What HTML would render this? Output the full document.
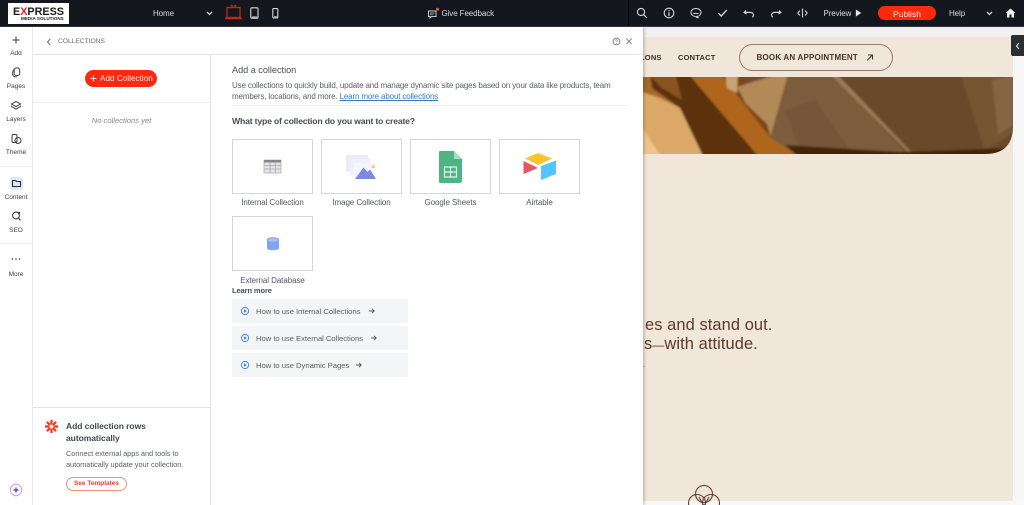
<!DOCTYPE html>
<html><head><meta charset="utf-8">
<style>
html,body{margin:0;padding:0;background:#f1f1f1}
#r{position:relative;width:1024px;height:505px;overflow:hidden;background:#f1f1f1;font-family:"Liberation Sans",sans-serif;color:#4a4c55}
#r div,#r span.t{position:absolute}
.t{white-space:nowrap;line-height:1}
.rl{left:0;width:32px;text-align:center;font-size:6.5px;color:#3c3e46}
.w{color:#d8d9dc;font-size:8px;letter-spacing:-.1px}
.card{width:79px;height:53px;border:1px solid #d4d5d8;background:#fff;box-sizing:content-box}
.cl{font-size:8px;letter-spacing:-.08px;color:#55575f;text-align:center;width:81px}
.lm{left:232px;width:176px;height:24px;background:#f4f5f6;border-radius:2px}
.desc{font-size:8px;letter-spacing:-.15px;color:#5d5f67}
.how{font-size:7.7px;letter-spacing:-.05px;color:#5d5f67}
svg{position:absolute;overflow:visible}
</style></head><body>
<div id="r">
<!-- right strip + page -->
<div style="left:1013px;top:37px;width:11px;height:468px;background:#f7f7f7"></div>
<div style="left:640px;top:37px;width:373px;height:464px;background:#f0e6da"></div>
<div style="left:640px;top:501px;width:384px;height:4px;background:#f8f8f8"></div>
<!-- hero image -->
<svg style="left:0;top:0" width="1024" height="505" viewBox="0 0 1024 505">
<defs><filter id="b" x="-5%" y="-5%" width="110%" height="110%"><feGaussianBlur stdDeviation="1.1"/></filter>
<clipPath id="c"><path d="M640 77H1013V126Q1013 154 985 154H640Z"/></clipPath></defs>
<g clip-path="url(#c)"><g filter="url(#b)">
<rect x="636" y="72" width="382" height="86" fill="#704e2e"/>
<polygon points="636,72 700,72 760,158 636,158" fill="#dca868"/>
<polygon points="636,72 690,72 680,108 660,98 636,90" fill="#a7682c"/>
<polygon points="636,118 662,158 636,158" fill="#eec48d"/>
<polygon points="650,72 687,72 760,158 704,158 680,108 652,88" fill="#5c300f"/>
<polygon points="650,76 675,72 682,100 662,88" fill="#8a5320"/>
<polygon points="687,72 719,72 770,137 796,154 760,158" fill="#b0651d"/>
<polygon points="719,72 738,72 778,132 770,137" fill="#7c4516"/>
<polygon points="725,72 738,72 737,93 727,88" fill="#c8a473"/>
<polygon points="737,87 785,72 790,80 771,138 767,124 746,104" fill="#b28a58"/>
<polygon points="770,138 788,74 832,72 908,156 795,153" fill="#7d5c3c"/>
<polygon points="785,110 815,100 850,150 800,150" fill="#775537"/>
<polygon points="828,72 835,72 915,154 910,154" fill="#9b7a55"/>
<polygon points="835,72 1018,72 1018,158 915,156" fill="#6b4a2b"/>
<polygon points="960,72 1018,72 1018,130 985,150 975,120" fill="#755433"/>
<polygon points="992,80 1013,76 1013,125 998,135" fill="#866545"/>
<polygon points="785,145 900,152 1010,148 1000,158 800,158" fill="#3f250f"/>
</g></g>
<!-- flower logo -->
<g fill="none" stroke="#5d3c2c" stroke-width="1.100">
<circle cx="704" cy="494" r="8.500"/><circle cx="697" cy="503" r="8.500"/><circle cx="711" cy="503" r="8.500"/>
<path d="M699 497L704 506L709 497"/>
</g>
<circle cx="644" cy="366.500" r=".6" fill="#9a8272"/>
</svg>
<!-- nav text -->
<span class="t" style="left:640px;top:53.500px;font-size:7.500px;font-weight:bold;color:#402c25;letter-spacing:.2px">LONS</span>
<span class="t" style="left:678px;top:53.500px;font-size:7.500px;font-weight:bold;color:#402c25;letter-spacing:.2px">CONTACT</span>
<div style="left:738.500px;top:43.500px;width:152px;height:25px;border:1px solid #947a6c;border-radius:14px;box-sizing:content-box"></div>
<span class="t" style="left:756.500px;top:53.500px;font-size:8px;font-weight:bold;color:#4a342b;letter-spacing:.2px">BOOK AN APPOINTMENT</span>
<svg style="left:865px;top:53px" width="9" height="9"><path d="M2 7.500L7.500 2M3 2H7.500V6.500" fill="none" stroke="#4a342b" stroke-width="1"/></svg>
<!-- hero text -->
<span class="t" style="left:645px;top:317px;font-size:16.400px;color:#5a3a2b;letter-spacing:.1px">es and stand out.</span>
<span class="t" style="left:644px;top:336px;font-size:16.400px;color:#5a3a2b;letter-spacing:.1px">s<span style="font-size:12px">—</span>with attitude.</span>
<!-- side tab -->
<div style="left:1011px;top:35px;width:13px;height:21px;background:#2a2d34;border-radius:2px 0 0 2px"></div>
<svg style="left:1015px;top:42px" width="6" height="8"><path d="M4 1L1.500 4L4 7" fill="none" stroke="#e5e5e5" stroke-width="1.100"/></svg>

<!-- top bar -->
<div style="left:0;top:0;width:1024px;height:26px;background:#15171f;border-bottom:1px solid #33353c"></div>
<div style="left:8px;top:3px;width:61px;height:21px;background:#fff"></div>
<span class="t" style="left:13px;top:7px;font-size:10.800px;font-weight:bold;color:#1a1a1a;letter-spacing:0">E<span style="color:#d3232a">X</span>PRESS</span>
<span class="t" style="left:21px;top:16.500px;font-size:4.600px;font-weight:bold;color:#222">MEDIA SOLUTIONS</span>
<span class="t w" style="left:153px;top:9.500px">Home</span>
<svg style="left:206px;top:11px" width="7" height="5"><path d="M1 1L3.500 3.500L6 1" fill="none" stroke="#ddd" stroke-width="1.300"/></svg>
<!-- desktop -->
<svg style="left:225px;top:4px" width="17" height="16" viewBox="0 0 17 16"><path d="M5.500 2.500L6 0.500L8.500 2L11 .5L11.500 2.500Z" fill="#c9260f"/><rect x="2" y="3.500" width="13" height="10" fill="none" stroke="#c9260f" stroke-width="1.300"/><rect x="0" y="13.500" width="17" height="1.700" fill="#c9260f"/></svg>
<svg style="left:250px;top:7px" width="9" height="12"><rect x=".8" y=".8" width="7.200" height="10.400" rx="1" fill="none" stroke="#d6d7da" stroke-width="1.100"/><path d="M2 10H7" stroke="#d6d7da"/></svg>
<svg style="left:272px;top:8px" width="7" height="11"><rect x=".8" y=".6" width="5" height="9.400" rx="1" fill="none" stroke="#d6d7da" stroke-width="1.100"/><path d="M2 8.800H5" stroke="#d6d7da"/></svg>
<!-- feedback -->
<svg style="left:427px;top:7px" width="13" height="12"><path d="M1.500 4H9V9.500H4.500L3 11V9.500H1.500Z" fill="none" stroke="#c9cacd" stroke-width="1"/><path d="M3 6H7.500M3 7.800H6.500" stroke="#c9cacd" stroke-width=".7"/><circle cx="10.500" cy="2.200" r="1.500" fill="#e2592a"/></svg>
<span class="t w" style="left:441.500px;top:9.500px">Give Feedback</span>
<div style="left:628px;top:0;width:1px;height:26px;background:#000"></div>
<svg style="left:636px;top:7px" width="12" height="12"><circle cx="5" cy="5" r="3.600" fill="none" stroke="#d4d5d8" stroke-width="1.100"/><path d="M7.800 7.800L11 11" stroke="#d4d5d8" stroke-width="1.200"/></svg>
<svg style="left:663px;top:7px" width="12" height="12"><circle cx="6" cy="6" r="4.800" fill="none" stroke="#d4d5d8" stroke-width="1.100"/><path d="M6 5.200V9M6 3V4.200" stroke="#d4d5d8" stroke-width="1.200"/></svg>
<svg style="left:690px;top:7px" width="12" height="12"><path d="M6 1.500C9 1.500 11 3.200 11 5.500C11 7.800 9 9.400 7 9.400L8.500 11L4.500 9.300C2.500 8.800 1 7.500 1 5.500C1 3.200 3 1.500 6 1.500Z" fill="none" stroke="#d4d5d8" stroke-width="1"/><path d="M3.500 6.500H8.500" stroke="#d4d5d8"/></svg>
<svg style="left:717px;top:8px" width="11" height="10"><path d="M1.500 5.200L4.200 8L9.800 2" fill="none" stroke="#d4d5d8" stroke-width="1.300"/></svg>
<svg style="left:743px;top:8px" width="12" height="10"><path d="M3 2.500L1.200 4.500L3.500 6M1.500 4.400H7C9 4.400 10.500 5.500 10.500 7C10.500 8 10 8.800 9.300 9.300" fill="none" stroke="#d4d5d8" stroke-width="1.200"/></svg>
<svg style="left:770px;top:8px" width="12" height="10"><path d="M9 2.500L10.800 4.500L8.500 6M10.500 4.400H5C3 4.400 1.500 5.500 1.500 7C1.500 8 2 8.800 2.700 9.300" fill="none" stroke="#d4d5d8" stroke-width="1.200"/></svg>
<svg style="left:797px;top:7px" width="11" height="12"><path d="M3 3.500L.8 6L3 8.500M8 3.500L10.200 6L8 8.500M5.500 1.500V10.500" fill="none" stroke="#d4d5d8" stroke-width="1.100"/></svg>
<span class="t w" style="left:823.500px;top:9.500px">Preview</span>
<svg style="left:855px;top:9px" width="7" height="8"><path d="M.8 .5L6.300 4L.8 7.500Z" fill="#e6e6e6"/></svg>
<div style="left:878px;top:6px;width:58px;height:14px;background:#ff2a0e;border-radius:7px"></div>
<span class="t" style="left:878px;top:9.500px;width:58px;text-align:center;font-size:8.500px;color:#fbe5df">Publish</span>
<span class="t w" style="left:949px;top:9.500px">Help</span>
<svg style="left:986px;top:11px" width="7" height="5"><path d="M1 1L3.500 3.500L6 1" fill="none" stroke="#ddd" stroke-width="1.300"/></svg>
<svg style="left:1005px;top:8px" width="11" height="10"><path d="M5.500 .5L10.500 5H9V9.500H6.500V6.500H4.500V9.500H2V5H.5Z" fill="#f1f1f1"/></svg>

<!-- panel -->
<div style="left:0;top:27px;width:643px;height:478px;background:#fff;box-shadow:1px 0 3px rgba(60,50,40,.35)"></div>
<div style="left:32px;top:27px;width:1px;height:478px;background:#e8e9eb"></div>
<div style="left:33px;top:54px;width:610px;height:1px;background:#e3e4e6"></div>
<div style="left:210px;top:55px;width:1px;height:450px;background:#e3e4e6"></div>
<div style="left:33px;top:102px;width:177px;height:1px;background:#eeeeef"></div>
<div style="left:33px;top:407px;width:177px;height:1px;background:#e3e4e6"></div>
<div style="left:0;top:166px;width:32px;height:1px;background:#eeeeef"></div>
<div style="left:0;top:243px;width:32px;height:1px;background:#eeeeef"></div>
<div style="left:232px;top:105px;width:395px;height:1px;background:#eeeeef"></div>

<!-- rail -->
<svg style="left:11px;top:35px" width="10" height="10"><path d="M5 1.500V8.500M1.500 5H8.500" stroke="#3c3e46" stroke-width="1"/></svg>
<span class="t rl" style="top:50.500px">Add</span>
<svg style="left:11px;top:67px" width="10" height="11"><rect x="3.200" y="1" width="5.500" height="7.500" rx="2" fill="none" stroke="#3c3e46" stroke-width="1"/><path d="M3 2.500C1.500 3.500 1.300 7 2 8.500C3 10 5 10 6 9.700" fill="none" stroke="#3c3e46"/></svg>
<span class="t rl" style="top:83.500px">Pages</span>
<svg style="left:10px;top:100px" width="12" height="11"><path d="M6 1.500L10.500 4L6 6.500L1.500 4Z M2 5.800L1.500 6.500L6 9L10.500 6.500L10 5.800" fill="none" stroke="#3c3e46" stroke-width="1"/></svg>
<span class="t rl" style="top:116.500px">Layers</span>
<svg style="left:10px;top:133px" width="12" height="12"><rect x="2" y="1.500" width="5" height="8" rx="1.500" fill="none" stroke="#3c3e46"/><circle cx="8" cy="7.500" r="3" fill="none" stroke="#3c3e46"/></svg>
<span class="t rl" style="top:149.500px">Theme</span>
<div style="left:10px;top:177px;width:13px;height:13px;background:#dceaf8;border-radius:2px"></div>
<svg style="left:11px;top:178px" width="11" height="11"><path d="M1.500 2.500H4.500L5.500 3.500H9.500V8.500H1.500Z" fill="none" stroke="#2c2e36" stroke-width="1.100"/></svg>
<span class="t rl" style="top:194.500px">Content</span>
<svg style="left:11px;top:210px" width="11" height="12"><circle cx="5" cy="5.500" r="3.400" fill="none" stroke="#3c3e46" stroke-width="1.100"/><path d="M7.500 8L9.500 10.500" stroke="#3c3e46" stroke-width="1.100"/><circle cx="8" cy="3" r="1.200" fill="#3c3e46"/></svg>
<span class="t rl" style="top:227.500px">SEO</span>
<svg style="left:11px;top:257px" width="10" height="4"><circle cx="1.500" cy="2" r=".8" fill="#3c3e46"/><circle cx="5" cy="2" r=".8" fill="#3c3e46"/><circle cx="8.500" cy="2" r=".8" fill="#3c3e46"/></svg>
<span class="t rl" style="top:271.500px">More</span>
<svg style="left:9px;top:483px" width="14" height="14"><circle cx="7" cy="7" r="5.700" fill="#fff" stroke="#b9a3e8" stroke-width="1"/><path d="M7 3.500L8 6L10.500 7L8 8L7 10.500L6 8L3.500 7L6 6Z" fill="#6a4fd8"/></svg>

<!-- panel header -->
<svg style="left:46px;top:38px" width="6" height="8"><path d="M4.200 1L1.500 4L4.200 7" fill="none" stroke="#6a6c74" stroke-width="1"/></svg>
<span class="t" style="left:58px;top:39px;font-size:6.800px;letter-spacing:-.1px;color:#6d6f76">COLLECTIONS</span>
<svg style="left:612px;top:37px" width="9" height="9"><circle cx="4.500" cy="4.500" r="3.400" fill="none" stroke="#85878d"/><path d="M3.400 3.600C3.600 2.400 5.600 2.500 5.600 3.700C5.600 4.500 4.500 4.500 4.500 5.400M4.500 6V6.800" fill="none" stroke="#85878d" stroke-width=".7"/></svg>
<svg style="left:625px;top:37px" width="8" height="9"><path d="M1.300 1.500L6.700 7.200M6.700 1.500L1.300 7.200" stroke="#85878d" stroke-width="1"/></svg>

<!-- add collection button -->
<div style="left:85px;top:70px;width:72px;height:17px;background:#ff2a0e;border-radius:9px"></div>
<svg style="left:89px;top:74px" width="9" height="9"><path d="M4.500 1.500V7.500M1.500 4.500H7.500" stroke="#fbe5df" stroke-width="1"/></svg>
<span class="t" style="left:100px;top:74.500px;font-size:8.200px;color:#fde9e4">Add Collection</span>
<span class="t" style="left:33px;width:177px;text-align:center;top:117px;font-size:7.600px;font-style:italic;color:#85878d">No collections yet</span>

<!-- promo -->
<svg style="left:44px;top:419px" width="15" height="15"><g stroke="#f2361a" stroke-width="2.200"><path d="M7.500 1V14M1 7.500H14M2.900 2.900L12.100 12.100M12.100 2.900L2.900 12.100"/></g><circle cx="7.500" cy="7.500" r="2" fill="#fff"/></svg>
<span class="t" style="left:66px;top:422px;font-size:8.500px;letter-spacing:-.05px;font-weight:bold;color:#44464e">Add collection rows</span>
<span class="t" style="left:66px;top:434px;font-size:8.500px;letter-spacing:-.05px;font-weight:bold;color:#44464e">automatically</span>
<span class="t" style="left:66px;top:450px;font-size:7.400px;letter-spacing:-.05px;color:#5d5f67">Connect external apps and tools to</span>
<span class="t" style="left:66px;top:460.500px;font-size:7.400px;letter-spacing:-.05px;color:#5d5f67">automatically update your collection.</span>
<div style="left:66px;top:477px;width:59px;height:12px;border:1px solid #f98d7c;border-radius:7px;box-sizing:content-box"></div>
<span class="t" style="left:66px;width:61px;text-align:center;top:480.500px;font-size:6.500px;font-weight:bold;color:#f0402a">See Templates</span>

<!-- main -->
<span class="t" style="left:232px;top:65.500px;font-size:9.100px;color:#4a4c55">Add a collection</span>
<span class="t desc" style="left:232px;top:81.500px">Use collections to quickly build, update and manage dynamic site pages based on your data like products, team</span>
<span class="t desc" style="left:232px;top:92.500px">members, locations, and more. <span style="color:#3a78c9;text-decoration:underline">Learn more about collections</span></span>
<span class="t" style="left:232px;top:116.500px;font-size:8.700px;letter-spacing:-.2px;font-weight:bold;color:#4a4c55">What type of collection do you want to create?</span>

<div class="card" style="left:232px;top:139px"></div>
<div class="card" style="left:321px;top:139px"></div>
<div class="card" style="left:410px;top:139px"></div>
<div class="card" style="left:499px;top:139px"></div>
<div class="card" style="left:232px;top:216px"></div>
<span class="t cl" style="left:232px;top:199px">Internal Collection</span>
<span class="t cl" style="left:321px;top:199px">Image Collection</span>
<span class="t cl" style="left:410px;top:199px">Google Sheets</span>
<span class="t cl" style="left:499px;top:199px">Airtable</span>
<span class="t cl" style="left:232px;top:276.500px">External Database</span>

<!-- card icons -->
<svg style="left:0;top:0" width="1024" height="505" viewBox="0 0 1024 505">
<rect x="264" y="160" width="17" height="13" fill="#e4e4e6" stroke="#a8a9ad" stroke-width=".7"/>
<rect x="264" y="160" width="17" height="2.500" fill="#85868b"/>
<path d="M264 165.500H281M264 169H281M270 162V173M275.500 162V173" stroke="#a8a9ad" stroke-width=".7"/>
<!-- image collection -->
<rect x="346" y="155" width="22" height="17" fill="#e9edf7"/>
<rect x="350" y="159" width="20" height="16" fill="#eef1f9"/>
<rect x="354" y="163" width="21" height="16" fill="#f3f6fc"/>
<path d="M355 179L363.500 167.500L367.500 172L370 169.500L376 179Z" fill="#7d88e0"/>
<circle cx="373.300" cy="166.700" r="1.500" fill="#f7be83"/>
<!-- sheets -->
<path d="M440 151H454L462 159V181C462 182 461 183 460 183H440C439 183 439 182 439 181V152C439 151.500 439.500 151 440 151Z" fill="#4fb483"/>
<path d="M454 151L462 159H454Z" fill="#a8dcbf"/>
<path d="M444.500 167H456.500V177H444.500Z" fill="none" stroke="#e3f4ea" stroke-width="1.200"/>
<path d="M450.500 167V177M444.500 172H456.500" stroke="#e3f4ea" stroke-width="1.200"/>
<!-- airtable -->
<path d="M525 158.500L538 153L552 158.500L538.500 165Z" fill="#fcc52e"/>
<path d="M541 166L556 160.500V174L541 180Z" fill="#54c4fb"/>
<path d="M523.500 161L538 168L523.500 174Z" fill="#e85563"/>
<!-- database -->
<path d="M267 239.500C267 236.500 279 236.500 279 239.500V248C279 251 267 251 267 248Z" fill="#80a4f2"/>
<ellipse cx="273" cy="240" rx="5" ry="1.800" fill="#a7c1f7"/>
<g fill="#d8d9dc"><circle cx="283" cy="166" r=".4"/><circle cx="286" cy="160" r=".4"/><circle cx="258" cy="171" r=".4"/><circle cx="261" cy="169" r=".4"/><circle cx="283" cy="238" r=".5"/><circle cx="286" cy="235" r=".5"/><circle cx="258" cy="250" r=".5"/><circle cx="262" cy="248" r=".5"/></g>
</svg>

<!-- learn more -->
<span class="t" style="left:232px;top:287px;font-size:7.500px;letter-spacing:-.1px;font-weight:bold;color:#4a4c55">Learn more</span>
<div class="lm" style="top:299px"></div>
<div class="lm" style="top:326px"></div>
<div class="lm" style="top:353px"></div>
<svg style="left:0;top:0" width="1024" height="505" viewBox="0 0 1024 505">
<g><circle cx="245" cy="311" r="3.600" fill="none" stroke="#4a86dc"/><path d="M244 309.400L246.800 311L244 312.600Z" fill="#3a70c8"/>
<circle cx="245" cy="338" r="3.600" fill="none" stroke="#4a86dc"/><path d="M244 336.400L246.800 338L244 339.600Z" fill="#3a70c8"/>
<circle cx="245" cy="365" r="3.600" fill="none" stroke="#4a86dc"/><path d="M244 363.400L246.800 365L244 366.600Z" fill="#3a70c8"/></g>
<g fill="none" stroke="#55575f" stroke-width=".9"><path d="M369 311H374M372 308.800L374.200 311L372 313.200"/><path d="M371 338H376M374 335.800L376.200 338L374 340.200"/><path d="M356 365H361M359 362.800L361.200 365L359 367.200"/></g>
</svg>
<span class="t how" style="left:256px;top:307.500px">How to use Internal Collections</span>
<span class="t how" style="left:256px;top:334.500px">How to use External Collections</span>
<span class="t how" style="left:256px;top:361.500px">How to use Dynamic Pages</span>
</div>
</body></html>
